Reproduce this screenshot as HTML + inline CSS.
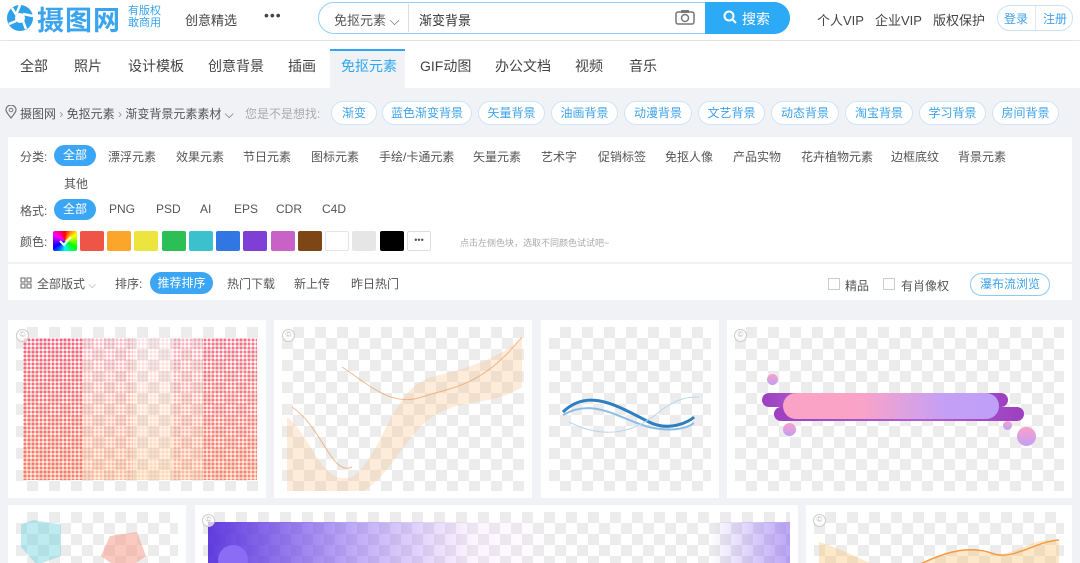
<!DOCTYPE html>
<html><head><meta charset="utf-8"><style>
*{margin:0;padding:0;box-sizing:border-box}
html,body{width:1080px;height:563px;overflow:hidden}
body{background:#f1f2f6;font-family:"Liberation Sans","Noto Sans CJK SC",sans-serif;color:#333;position:relative}
.a{position:absolute;white-space:nowrap}
.hdr{position:absolute;left:0;top:0;width:1080px;height:40px;background:#fff;box-shadow:0 2px 3px rgba(0,0,0,.08)}
.nav{position:absolute;left:0;top:41px;width:1080px;height:47px;background:#fff}
.t14{font-size:14px;color:#444}
.t12{font-size:12px;color:#555}
.tag{position:absolute;top:101px;height:24px;border:1px solid #cfe5f8;border-radius:12px;background:#fff;color:#3ea2ea;font-size:12px;text-align:center;line-height:22px}
.pill{position:absolute;height:21px;border-radius:11px;background:#3aa6f5;color:#fff;font-size:12px;text-align:center;line-height:21px}
.sw{position:absolute;top:231px;width:24px;height:20px;border-radius:2px}
.card{position:absolute;background:#fff;overflow:hidden}
.ck{position:absolute;left:8px;top:7px;right:8px;bottom:7px;background:conic-gradient(#ececec 25%,#fff 0 50%,#ececec 0 75%,#fff 0) 0 0/22px 22px;overflow:hidden}
.cp{position:absolute;width:13px;height:13px;border-radius:50%;border:1.5px solid #ccc;background:rgba(255,255,255,.7);font-size:8px;color:#bbb;text-align:center;line-height:10px}
.cb{position:absolute;top:278px;width:12px;height:12px;border:1px solid #ccc;background:#fff}
.dots{position:absolute;background:radial-gradient(circle,rgba(255,80,110,.9) 1.3px,transparent 1.7px) 0 0/4px 4px}
</style></head><body>
<div class="hdr"></div>
<svg class="a" style="left:6px;top:4px" width="28" height="28" viewBox="0 0 28 28"><circle cx="14" cy="14" r="13" fill="#2ea1ea"/><circle cx="14" cy="14" r="5" fill="#fff"/><path d="M14 1 L10 11 M27 12 L17 10 M20 25 L17 17 M3 20 L10 17 M6 4 L11 12" stroke="#fff" stroke-width="2.5"/></svg>
<div class="a" style="left:37px;top:-1px;font-size:27px;font-weight:bold;color:#3aa4ee;letter-spacing:1px">摄图网</div>
<div class="a" style="left:128px;top:5px;font-size:11px;line-height:12px;color:#3aa4ee">有版权<br>敢商用</div>
<div class="a" style="left:185px;top:10px;font-size:13px;color:#444">创意精选</div>
<div class="a" style="left:264px;top:7px;font-size:14px;color:#444;letter-spacing:1px">•••</div>
<div class="a" style="left:318px;top:2px;width:472px;height:32px;border:1.5px solid #8fd0fa;border-radius:16px;background:#fff"></div>
<div class="a" style="left:334px;top:10px;font-size:13px;color:#555">免抠元素 ⌵</div>
<div class="a" style="left:408px;top:4px;width:1px;height:28px;background:#ddd"></div>
<div class="a" style="left:419px;top:10px;font-size:13px;color:#333">渐变背景</div>
<svg class="a" style="left:675px;top:9px" width="20" height="16" viewBox="0 0 20 16"><rect x="1" y="3" width="18" height="12" rx="2" fill="none" stroke="#777" stroke-width="1.5"/><rect x="6" y="1" width="8" height="3" fill="#777"/><circle cx="10" cy="9" r="3.5" fill="none" stroke="#777" stroke-width="1.5"/></svg>
<div class="a" style="left:705px;top:2px;width:85px;height:32px;background:#2daaf6;border-radius:0 16px 16px 0"></div>
<svg class="a" style="left:723px;top:10px" width="14" height="14" viewBox="0 0 14 14"><circle cx="6" cy="6" r="4.5" fill="none" stroke="#fff" stroke-width="2"/><path d="M9.5 9.5 L13 13" stroke="#fff" stroke-width="2"/></svg>
<div class="a" style="left:742px;top:9px;font-size:14px;color:#fff">搜索</div>
<div class="a" style="left:817px;top:10px;font-size:13px;color:#444">个人VIP</div>
<div class="a" style="left:875px;top:10px;font-size:13px;color:#444">企业VIP</div>
<div class="a" style="left:933px;top:10px;font-size:13px;color:#444">版权保护</div>
<div class="a" style="left:997px;top:5px;width:76px;height:26px;border:1px solid #c9e3f7;border-radius:13px"></div>
<div class="a" style="left:1035px;top:6px;width:1px;height:24px;background:#dbe9f5"></div>
<div class="a" style="left:1004px;top:10px;font-size:12px;color:#3ea2ea">登录</div>
<div class="a" style="left:1043px;top:10px;font-size:12px;color:#3ea2ea">注册</div>

<div class="nav"></div>
<div class="a" style="left:330px;top:49px;width:75px;height:39px;background:#f1f2f6;border-top:2px solid #2ea7f0"></div>
<div class="a t14" style="left:20px;top:56px">全部</div>
<div class="a t14" style="left:74px;top:56px">照片</div>
<div class="a t14" style="left:128px;top:56px">设计模板</div>
<div class="a t14" style="left:208px;top:56px">创意背景</div>
<div class="a t14" style="left:288px;top:56px">插画</div>
<div class="a t14" style="left:341px;top:56px;color:#2ea7f0">免抠元素</div>
<div class="a t14" style="left:420px;top:56px">GIF动图</div>
<div class="a t14" style="left:495px;top:56px">办公文档</div>
<div class="a t14" style="left:575px;top:56px">视频</div>
<div class="a t14" style="left:629px;top:56px">音乐</div>

<svg class="a" style="left:5px;top:105px" width="12" height="14" viewBox="0 0 12 14"><path d="M6 13 C2 8 1 6.5 1 5 A5 5 0 0 1 11 5 C11 6.5 10 8 6 13Z" fill="none" stroke="#777" stroke-width="1.2"/><circle cx="6" cy="5" r="1.8" fill="none" stroke="#777"/></svg>
<div class="a t12" style="left:20px;top:105px">摄图网 <span style="color:#999">›</span> 免抠元素 <span style="color:#999">›</span> 渐变背景元素素材 ⌵</div>
<div class="a" style="left:245px;top:105px;font-size:12px;color:#aaa">您是不是想找:</div>
<div class="tag" style="left:331px;width:46px">渐变</div>
<div class="tag" style="left:382px;width:90px">蓝色渐变背景</div>
<div class="tag" style="left:478px;width:67px">矢量背景</div>
<div class="tag" style="left:551px;width:67px">油画背景</div>
<div class="tag" style="left:624px;width:68px">动漫背景</div>
<div class="tag" style="left:698px;width:67px">文艺背景</div>
<div class="tag" style="left:771px;width:68px">动态背景</div>
<div class="tag" style="left:845px;width:68px">淘宝背景</div>
<div class="tag" style="left:919px;width:67px">学习背景</div>
<div class="tag" style="left:992px;width:67px">房间背景</div>

<div class="a" style="left:8px;top:137px;width:1064px;height:125px;background:#fff"></div>
<div class="a" style="left:8px;top:264px;width:1064px;height:36px;background:#fff"></div>
<div class="a t12" style="left:20px;top:148px">分类:</div>
<div class="pill" style="left:54px;top:145px;width:42px">全部</div>
<div class="a t12" style="left:108px;top:148px">漂浮元素</div>
<div class="a t12" style="left:176px;top:148px">效果元素</div>
<div class="a t12" style="left:243px;top:148px">节日元素</div>
<div class="a t12" style="left:311px;top:148px">图标元素</div>
<div class="a t12" style="left:379px;top:148px">手绘/卡通元素</div>
<div class="a t12" style="left:473px;top:148px">矢量元素</div>
<div class="a t12" style="left:541px;top:148px">艺术字</div>
<div class="a t12" style="left:598px;top:148px">促销标签</div>
<div class="a t12" style="left:665px;top:148px">免抠人像</div>
<div class="a t12" style="left:733px;top:148px">产品实物</div>
<div class="a t12" style="left:801px;top:148px">花卉植物元素</div>
<div class="a t12" style="left:891px;top:148px">边框底纹</div>
<div class="a t12" style="left:958px;top:148px">背景元素</div>
<div class="a t12" style="left:64px;top:175px">其他</div>
<div class="a t12" style="left:20px;top:202px">格式:</div>
<div class="pill" style="left:54px;top:199px;width:42px">全部</div>
<div class="a t12" style="left:109px;top:202px">PNG</div>
<div class="a t12" style="left:156px;top:202px">PSD</div>
<div class="a t12" style="left:200px;top:202px">AI</div>
<div class="a t12" style="left:234px;top:202px">EPS</div>
<div class="a t12" style="left:276px;top:202px">CDR</div>
<div class="a t12" style="left:322px;top:202px">C4D</div>
<div class="a t12" style="left:20px;top:233px">颜色:</div>
<div class="sw" style="left:53px;background:conic-gradient(red,yellow,lime,cyan,blue,magenta,red)"><svg width="24" height="20"><path d="M7 10 L11 14 L18 6" stroke="#fff" stroke-width="2" fill="none"/></svg></div>
<div class="sw" style="left:80px;background:#ee5546"></div>
<div class="sw" style="left:107px;background:#fba62a"></div>
<div class="sw" style="left:134px;background:#ede53f"></div>
<div class="sw" style="left:162px;background:#2cbf55"></div>
<div class="sw" style="left:189px;background:#3ac1cd"></div>
<div class="sw" style="left:216px;background:#3276e4"></div>
<div class="sw" style="left:243px;background:#7f3fd6"></div>
<div class="sw" style="left:271px;background:#c962c6"></div>
<div class="sw" style="left:298px;background:#7c4715"></div>
<div class="sw" style="left:325px;background:#fff;border:1px solid #e5e5e5"></div>
<div class="sw" style="left:352px;background:#e6e6e6"></div>
<div class="sw" style="left:380px;background:#000"></div>
<div class="sw" style="left:407px;background:#fff;border:1px solid #ddd;font-size:9px;text-align:center;line-height:17px;color:#555">•••</div>
<div class="a" style="left:460px;top:236px;font-size:9px;color:#aaa">点击左侧色块，选取不同颜色试试吧~</div>
<div class="a" style="left:8px;top:262px;width:1064px;height:2px;background:#f1f2f6"></div>
<svg class="a" style="left:20px;top:277px" width="12" height="12" viewBox="0 0 12 12"><rect x="1" y="1" width="4" height="4" fill="none" stroke="#666"/><rect x="7" y="1" width="4" height="4" fill="none" stroke="#666"/><rect x="1" y="7" width="4" height="4" fill="none" stroke="#666"/><rect x="7" y="7" width="4" height="4" fill="none" stroke="#666"/></svg>
<div class="a t12" style="left:37px;top:275px">全部版式 <span style="color:#999;font-size:10px">⌵</span></div>
<div class="a t12" style="left:115px;top:275px">排序:</div>
<div class="pill" style="left:150px;top:272px;width:63px;height:22px;line-height:22px">推荐排序</div>
<div class="a t12" style="left:227px;top:275px">热门下载</div>
<div class="a t12" style="left:294px;top:275px">新上传</div>
<div class="a t12" style="left:351px;top:275px">昨日热门</div>
<div class="cb" style="left:828px"></div>
<div class="a t12" style="left:845px;top:277px">精品</div>
<div class="cb" style="left:883px"></div>
<div class="a t12" style="left:901px;top:277px">有肖像权</div>
<div class="a" style="left:970px;top:273px;width:80px;height:23px;border:1px solid #8ccaf6;border-radius:12px;font-size:12px;color:#3ea2ea;text-align:center;line-height:21px">瀑布流浏览</div>

<div class="card" style="left:8px;top:320px;width:258px;height:178px"><div class="ck">
<div class="dots" style="left:7px;top:11px;width:60px;height:142px"></div>
<div class="dots" style="left:67px;top:11px;width:50px;height:142px;opacity:.45"></div>
<div class="dots" style="left:117px;top:11px;width:40px;height:142px;opacity:.2"></div>
<div class="dots" style="left:157px;top:11px;width:30px;height:142px;opacity:.5"></div>
<div class="dots" style="left:187px;top:11px;width:54px;height:142px;opacity:.9"></div>
<div class="a" style="left:7px;top:11px;width:234px;height:142px;background:linear-gradient(180deg,rgba(255,255,255,0),rgba(255,190,90,.25))"></div>
</div><div class="cp" style="left:8px;top:9px">©</div></div>
<div class="card" style="left:274px;top:320px;width:258px;height:178px"><div class="ck">
<svg class="a" style="left:0;top:0" width="244" height="164"><path d="M5 90 C30 110 40 160 70 150 C100 130 110 60 150 50 C190 40 220 30 240 10 L240 60 C210 80 180 70 150 90 C120 110 100 170 60 170 L5 170Z" fill="rgba(250,200,150,.35)"/><path d="M10 80 C40 100 50 150 70 140 M60 40 C90 60 110 80 140 70 C170 60 200 60 240 10" stroke="#f0a060" stroke-width="1" fill="none" opacity=".7"/></svg>
</div><div class="cp" style="left:8px;top:9px">©</div></div>
<div class="card" style="left:541px;top:320px;width:178px;height:178px"><div class="ck">
<svg class="a" style="left:0;top:0" width="164" height="164"><path d="M14 85 C40 60 70 80 100 95 C120 105 140 95 145 90" stroke="#2f7fc0" stroke-width="3" fill="none"/><path d="M14 88 C45 70 70 92 100 100 C125 106 140 100 145 96" stroke="#8bbde6" stroke-width="2" fill="none"/><path d="M20 95 C50 110 80 110 110 85 C130 70 140 70 150 70" stroke="#b9d8ef" stroke-width="1" fill="none"/></svg>
</div></div>
<div class="card" style="left:727px;top:320px;width:345px;height:178px"><div class="ck">
<div class="a" style="left:27px;top:66px;width:246px;height:14px;border-radius:7px;background:linear-gradient(90deg,#9d3fc0,#c07fe0 40%,#9d3fc0)"></div>
<div class="a" style="left:39px;top:80px;width:250px;height:14px;border-radius:7px;background:linear-gradient(90deg,#9d3fc0,#b060d0 60%,#9d3fc0)"></div>
<div class="a" style="left:48px;top:66px;width:216px;height:26px;border-radius:13px;background:linear-gradient(90deg,#fba3c7,#fba3c7 35%,#c4a0f5 75%,#bea0f8)"></div>
<div class="a" style="left:32px;top:47px;width:11px;height:11px;border-radius:50%;background:linear-gradient(#f9a0c8,#c0a0f5)"></div>
<div class="a" style="left:48px;top:96px;width:13px;height:13px;border-radius:50%;background:linear-gradient(#f9a0c8,#c0a0f5)"></div>
<div class="a" style="left:268px;top:94px;width:9px;height:9px;border-radius:50%;background:linear-gradient(#f9a0c8,#c0a0f5)"></div>
<div class="a" style="left:282px;top:100px;width:19px;height:19px;border-radius:50%;background:linear-gradient(#f9a0c8,#c0a0f5)"></div>
</div><div class="cp" style="left:7px;top:9px">©</div></div>
<div class="card" style="left:8px;top:505px;width:178px;height:70px"><div class="ck">
<div class="a" style="left:5px;top:8px;width:40px;height:45px;background:rgba(110,210,220,.45);clip-path:polygon(30% 0,100% 10%,100% 80%,40% 100%,0 60%,0 10%)"></div>
<div class="a" style="left:85px;top:20px;width:45px;height:40px;background:rgba(245,150,130,.5);clip-path:polygon(20% 10%,80% 0,100% 60%,50% 100%,0 60%)"></div>
</div></div>
<div class="card" style="left:195px;top:505px;width:603px;height:70px"><div class="ck">
<div class="a" style="left:5px;top:10px;width:590px;height:60px;background:linear-gradient(90deg,rgba(80,40,220,.9),rgba(130,90,240,.5) 25%,rgba(240,200,255,.2) 45%,transparent 60%,transparent 85%,rgba(130,90,240,.6))"></div>
<div class="a" style="left:15px;top:33px;width:30px;height:30px;border-radius:50%;background:#8a6cf5"></div>
</div><div class="cp" style="left:7px;top:9px">©</div></div>
<div class="card" style="left:806px;top:505px;width:266px;height:70px"><div class="ck">
<svg class="a" style="left:0;top:0" width="250" height="60"><path d="M5 30 C40 40 60 60 90 55 C120 50 140 30 170 40 C200 50 220 20 245 30 L245 60 L5 60Z" fill="rgba(250,200,120,.4)"/><path d="M90 60 C120 45 150 30 180 42 C200 48 220 30 245 28" stroke="#f49a40" stroke-width="1.5" fill="none"/></svg>
</div><div class="cp" style="left:7px;top:9px">©</div></div>
</body></html>
